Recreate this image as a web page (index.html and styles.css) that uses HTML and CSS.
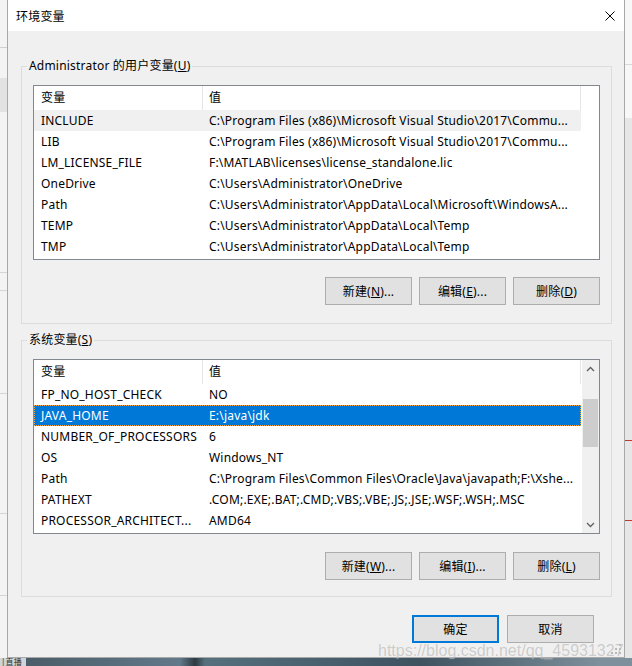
FILE: index.html
```html
<!DOCTYPE html>
<html lang="zh-CN">
<head>
<meta charset="utf-8">
<title>环境变量</title>
<link rel="stylesheet" href="styles.css">
</head>
<body>
<div class="screen">
  <div class="bg-left"></div>
  <div class="dialog">
    <div class="titlebar">
      <span class="title">环境变量</span>
      <svg class="close" width="10" height="10" viewBox="0 0 10 10"><path d="M0.5 0.5L9.5 9.5M9.5 0.5L0.5 9.5" stroke="#000" stroke-width="1" fill="none"/></svg>
    </div>

    <fieldset class="group group-user">
      <legend>Administrator 的用户变量(<u>U</u>)</legend>
      <div class="list">
        <div class="table">
          <div class="row head"><div class="cell">变量</div><div class="cell">值</div></div>
          <div class="row hover"><div class="cell">INCLUDE</div><div class="cell">C:\Program Files (x86)\Microsoft Visual Studio\2017\Commu...</div></div>
          <div class="row"><div class="cell">LIB</div><div class="cell">C:\Program Files (x86)\Microsoft Visual Studio\2017\Commu...</div></div>
          <div class="row"><div class="cell">LM_LICENSE_FILE</div><div class="cell">F:\MATLAB\licenses\license_standalone.lic</div></div>
          <div class="row"><div class="cell">OneDrive</div><div class="cell">C:\Users\Administrator\OneDrive</div></div>
          <div class="row"><div class="cell">Path</div><div class="cell">C:\Users\Administrator\AppData\Local\Microsoft\WindowsA...</div></div>
          <div class="row"><div class="cell">TEMP</div><div class="cell">C:\Users\Administrator\AppData\Local\Temp</div></div>
          <div class="row"><div class="cell">TMP</div><div class="cell">C:\Users\Administrator\AppData\Local\Temp</div></div>
        </div>
      </div>
      <div class="actions">
        <button class="btn">新建(<u>N</u>)...</button>
        <button class="btn">编辑(<u>E</u>)...</button>
        <button class="btn">删除(<u>D</u>)</button>
      </div>
    </fieldset>

    <fieldset class="group group-sys">
      <legend>系统变量(<u>S</u>)</legend>
      <div class="list">
        <div class="table">
          <div class="row head"><div class="cell">变量</div><div class="cell">值</div></div>
          <div class="row"><div class="cell">FP_NO_HOST_CHECK</div><div class="cell">NO</div></div>
          <div class="row selected"><div class="cell">JAVA_HOME</div><div class="cell">E:\java\jdk</div></div>
          <div class="row"><div class="cell">NUMBER_OF_PROCESSORS</div><div class="cell">6</div></div>
          <div class="row"><div class="cell">OS</div><div class="cell">Windows_NT</div></div>
          <div class="row"><div class="cell">Path</div><div class="cell">C:\Program Files\Common Files\Oracle\Java\javapath;F:\Xshe...</div></div>
          <div class="row"><div class="cell">PATHEXT</div><div class="cell">.COM;.EXE;.BAT;.CMD;.VBS;.VBE;.JS;.JSE;.WSF;.WSH;.MSC</div></div>
          <div class="row"><div class="cell">PROCESSOR_ARCHITECT...</div><div class="cell">AMD64</div></div>
        </div>
        <div class="vscroll">
          <div class="sb-btn"><svg width="9" height="6" viewBox="0 0 9 6"><path d="M1 5L4.5 1.5L8 5" stroke="#606060" stroke-width="1.3" fill="none"/></svg></div>
          <div class="sb-track"><div class="sb-thumb"></div></div>
          <div class="sb-btn"><svg width="9" height="6" viewBox="0 0 9 6"><path d="M1 1L4.5 4.5L8 1" stroke="#606060" stroke-width="1.3" fill="none"/></svg></div>
        </div>
      </div>
      <div class="actions">
        <button class="btn">新建(<u>W</u>)...</button>
        <button class="btn">编辑(<u>I</u>)...</button>
        <button class="btn">删除(<u>L</u>)</button>
      </div>
    </fieldset>

    <div class="dialog-actions">
      <button class="btn default">确定</button>
      <button class="btn">取消</button>
    </div>

    <svg class="grip" width="10" height="10" viewBox="0 0 10 10">
      <rect x="8" y="0" width="2" height="2" fill="#b8b8b8"/>
      <rect x="4" y="4" width="2" height="2" fill="#b8b8b8"/>
      <rect x="8" y="4" width="2" height="2" fill="#b8b8b8"/>
      <rect x="0" y="8" width="2" height="2" fill="#b8b8b8"/>
      <rect x="4" y="8" width="2" height="2" fill="#b8b8b8"/>
      <rect x="8" y="8" width="2" height="2" fill="#b8b8b8"/>
    </svg>
  </div>
  <div class="bg-right"></div>
  <div class="desktop"><span class="live">|直播</span></div>
  <div class="watermark">https://blog.csdn.net/qq_45931327</div>
</div>
</body>
</html>
```

FILE: styles.css
```css
body {
  margin: 0;
  font-family: "Noto Sans", "Noto Sans CJK SC", sans-serif;
  font-size: 12px;
  letter-spacing: 0.2px;
  color: #000;
}

.screen {
  position: relative;
  display: grid;
  grid-template-columns: 7px 618px 7px;
  grid-template-rows: 658px 8px;
  width: 632px;
  height: 666px;
  overflow: hidden;
  background: #e9e9e9;
}

.bg-left {
  background:
    linear-gradient(#cfcfcf, #cfcfcf) 0 47px / 100% 1px no-repeat,
    linear-gradient(#e2e2e2, #e2e2e2) 0 78px / 100% 34px no-repeat,
    linear-gradient(#d4d4d4, #d4d4d4) 0 272px / 100% 1px no-repeat,
    linear-gradient(#d4d4d4, #d4d4d4) 0 290px / 100% 1px no-repeat,
    linear-gradient(#d4d4d4, #d4d4d4) 0 393px / 100% 1px no-repeat,
    linear-gradient(#d4d4d4, #d4d4d4) 0 513px / 100% 1px no-repeat,
    linear-gradient(#d4d4d4, #d4d4d4) 0 595px / 100% 1px no-repeat,
    #f3f3f3;
}

.bg-right {
  background:
    linear-gradient(#d8d8d8, #d8d8d8) 0 64px / 100% 1px no-repeat,
    linear-gradient(#c0392b, #c0392b) 0 440px / 100% 1px no-repeat,
    linear-gradient(#c0392b, #c0392b) 0 520px / 100% 1px no-repeat,
    linear-gradient(to bottom, #f7f7f7 0 118px, #e6e6e6 118px);
}

.desktop {
  grid-column: 1 / -1;
  background: linear-gradient(90deg, #cdd5da 0 26px, #4a5d68 26px, #62798a 180px, #2d3a42 195px, #56707e 205px, #3e5260 420px, #7d909b 600px);
  font-size: 8px;
  line-height: 8px;
  overflow: hidden;
}

.live {
  color: #333;
  padding-left: 1px;
}

.dialog {
  position: relative;
  display: flex;
  flex-direction: column;
  box-sizing: border-box;
  background: #f0f0f0;
  border-left: 1px solid #a8a8a8;
  border-right: 1px solid #a8a8a8;
  border-bottom: 1px solid #a8a8a8;
}

.titlebar {
  flex: none;
  height: 31px;
  background: #fff;
  display: flex;
  align-items: center;
  justify-content: space-between;
  padding: 0 9px 0 8px;
}

.close {
  display: block;
}

.group {
  margin: 27px 12px 0 13px;
  padding: 11px 11px 18px;
  border: 1px solid #dcdcdc;
  min-width: 0;
}

.group-sys {
  margin-top: 8px;
  padding-bottom: 16px;
}

.group legend {
  padding: 0 2px;
  margin-left: -6px;
  line-height: 16px;
  height: 16px;
}

u {
  text-decoration: underline;
  text-underline-offset: 1px;
}

.list {
  height: 175px;
  box-sizing: border-box;
  border: 1px solid #828790;
  background: #fff;
  display: flex;
  overflow: hidden;
}

.table {
  flex: 1;
  min-width: 0;
}

.row {
  display: grid;
  grid-template-columns: 169px 378px;
  width: 547px;
  height: 21px;
  line-height: 21px;
  white-space: nowrap;
}

.row.head {
  height: 24px;
  line-height: 24px;
}

.head .cell {
  border-right: 1px solid #e5e5e5;
}

.cell {
  overflow: hidden;
  padding-left: 6px;
  box-sizing: border-box;
}

.cell:first-child {
  padding-left: 7px;
}

.row.hover {
  background: #f0f0f0;
}

.row.selected {
  background: #0078d7;
  color: #fff;
  outline: 1px dotted #f4a640;
  outline-offset: -1px;
}

.vscroll {
  flex: none;
  width: 17px;
  background: #f0f0f0;
  display: flex;
  flex-direction: column;
}

.sb-btn {
  height: 17px;
  display: flex;
  align-items: center;
  justify-content: center;
}

.sb-btn svg {
  display: block;
}

.sb-track {
  flex: 1;
  padding-top: 22px;
}

.sb-thumb {
  height: 48px;
  margin: 0 1px;
  background: #cdcdcd;
}

.actions {
  display: flex;
  justify-content: flex-end;
  gap: 7px;
  margin-top: 17px;
}

.group-sys .actions {
  margin-top: 18px;
}

.btn {
  width: 87px;
  height: 28px;
  box-sizing: border-box;
  padding: 0;
  border: 1px solid #adadad;
  background: #e1e1e1;
  font-family: "Noto Sans", "Noto Sans CJK SC", sans-serif;
  font-size: 12px;
  letter-spacing: 0.2px;
  color: #000;
}

.btn.default {
  border: 2px solid #0078d7;
}

.dialog-actions {
  display: flex;
  justify-content: flex-end;
  gap: 8px;
  margin: 18px 30px 0 0;
}

.grip {
  position: absolute;
  right: 3px;
  bottom: 3px;
}

.watermark {
  position: absolute;
  left: 378px;
  top: 642px;
  font-family: "Liberation Sans", Arial, sans-serif;
  font-size: 16px;
  line-height: 18px;
  letter-spacing: 0;
  color: rgba(150, 150, 150, 0.45);
  text-shadow: 0 0 1px rgba(255, 255, 255, 0.5);
  white-space: nowrap;
}
```
